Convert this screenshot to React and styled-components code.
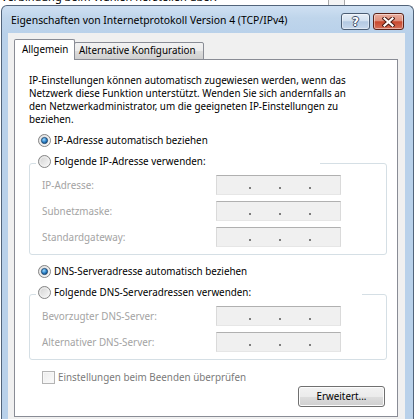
import React from "react";
import styled, { createGlobalStyle } from "styled-components";

const FONT = `"Noto Sans", "Open Sans", sans-serif`;

const GlobalStyle = createGlobalStyle`
  html, body { margin: 0; padding: 0; background: #fff; }
  body { font-family: ${FONT}; }
  #root { width: 417px; height: 419px; overflow: hidden; }
`;

const Screen = styled.div`
  width: 417px;
  height: 419px;
  overflow: hidden;
  background: #fff;
`;

const Strip = styled.div`
  height: 5px;
  overflow: hidden;
  display: flex;
  align-items: flex-start;
`;

const StripText = styled.div`
  margin-top: -10px;
  padding-left: 1px;
  font: 11px/14px ${FONT};
  color: #000;
  white-space: nowrap;
`;

const StripScroll = styled.div`
  margin-left: auto;
  margin-right: 72px;
  width: 15px;
  height: 5px;
  border-left: 1px solid #a9a9a9;
  border-right: 1px solid #a9a9a9;
  background: #f4f4f4;
`;

const Window = styled.div`
  margin-left: 1px;
  width: 413px;
  height: 414px;
  box-sizing: border-box;
  border: 1px solid #52647a;
  border-bottom: none;
  border-radius: 6px 6px 0 0;
  background: linear-gradient(#cfe0f2 0px, #bfd5eb 12px, #b9d1ea 28px);
  padding: 0 8px 0 6px;
  display: flex;
  flex-direction: column;
`;

const TitleBar = styled.div`
  height: 27px;
  flex: none;
  display: flex;
  align-items: flex-start;
  padding: 0 1px 0 3px;
`;

const Title = styled.div`
  margin-top: 7px;
  font: 10.4px/15px ${FONT};
  color: #000;
  white-space: nowrap;
`;

const CaptionButtons = styled.div`
  margin-left: auto;
  margin-top: 7px;
  display: flex;
  gap: 3px;
`;

const CaptionButton = styled.div`
  width: ${(p) => (p.$variant === "close" ? 31 : 29)}px;
  height: 17px;
  box-sizing: border-box;
  border: 1px solid ${(p) => (p.$variant === "close" ? "#5a2218" : "#4b5d73")};
  border-radius: 3px;
  background: ${(p) =>
    p.$variant === "close"
      ? "linear-gradient(#eaae9f 0%, #de8f7c 45%, #c9482d 52%, #d5705a 100%)"
      : "linear-gradient(#e6eef7 0%, #d3e1f0 45%, #b3c9e2 52%, #c7d8ec 100%)"};
  box-shadow: inset 0 0 0 1px rgba(255, 255, 255, 0.45);
  display: flex;
  align-items: center;
  justify-content: center;
`;

const HelpGlyph = styled.span`
  font: bold 12px/12px "DejaVu Sans", sans-serif;
  color: #fff;
  text-shadow: 1px 0 0 #3c4e66, -1px 0 0 #3c4e66, 0 1px 0 #3c4e66, 0 -1px 0 #3c4e66;
`;

const CloseIcon = () => (
  <svg width="13" height="10" viewBox="0 0 13 10">
    <path d="M2.5 1.5 L10.5 8.5 M10.5 1.5 L2.5 8.5" stroke="#4a1a12" strokeWidth="4.2" strokeLinecap="square" />
    <path d="M2.5 1.5 L10.5 8.5 M10.5 1.5 L2.5 8.5" stroke="#fff" strokeWidth="2.2" strokeLinecap="square" />
  </svg>
);

const Client = styled.div`
  flex: 1;
  background: #f0f0f0;
  padding: 6px 7px 0 6px;
  display: flex;
  flex-direction: column;
  font: 9.85px/15px ${FONT};
  color: #000;
`;

const TabRow = styled.div`
  display: flex;
  align-items: flex-end;
  position: relative;
  z-index: 1;
  margin-bottom: -1px;
`;

const Tab = styled.div`
  width: ${(p) => p.$w}px;
  height: ${(p) => (p.$active ? 21 : 18)}px;
  box-sizing: border-box;
  border: 1px solid #898c95;
  border-bottom: ${(p) => (p.$active ? "none" : "1px solid #898c95")};
  border-radius: 2px 2px 0 0;
  margin-left: ${(p) => (p.$active ? 0 : -1)}px;
  padding-left: ${(p) => (p.$active ? 7 : 4)}px;
  padding-top: ${(p) => (p.$active ? 2 : 0)}px;
  background: ${(p) =>
    p.$active ? "#fff" : "linear-gradient(#f2f2f2 0%, #ebebeb 50%, #dddddd 51%, #cfcfcf 100%)"};
  position: relative;
  z-index: ${(p) => (p.$active ? 2 : 1)};
  white-space: nowrap;
  line-height: 15px;
`;

const Panel = styled.div`
  border: 1px solid #898c95;
  background: #fff;
  display: flex;
  flex-direction: column;
  padding: 0 12px 9px 14px;
`;

const Intro = styled.p`
  margin: 14px 0 0;
  line-height: 13px;
  white-space: nowrap;
`;

const OptionRow = styled.div`
  margin-top: ${(p) => p.$top}px;
  padding-left: 9px;
  height: 15px;
  display: flex;
  align-items: center;
  gap: 3px;
  white-space: nowrap;
`;

const RadioSvg = styled.svg`
  flex: none;
  display: block;
`;

const Radio = ({ checked }) => (
  <RadioSvg width="13" height="13" viewBox="0 0 13 13">
    <defs>
      <linearGradient id="radioBg" x1="0" y1="0" x2="1" y2="1">
        <stop offset="0" stopColor="#cfcfcf" />
        <stop offset="1" stopColor="#fbfbfb" />
      </linearGradient>
      <radialGradient id="radioDot" cx="0.4" cy="0.35" r="0.75">
        <stop offset="0" stopColor="#9edbff" />
        <stop offset="0.55" stopColor="#2a7fc6" />
        <stop offset="1" stopColor="#0d3f70" />
      </radialGradient>
    </defs>
    <circle cx="6.5" cy="6.5" r="6" fill="url(#radioBg)" stroke="#858585" strokeWidth="1" />
    <circle cx="6.5" cy="6.5" r="4.6" fill="none" stroke="#f4f4f4" strokeWidth="0.8" />
    {checked && <circle cx="6.5" cy="6.5" r="3.1" fill="url(#radioDot)" stroke="#163a5e" strokeWidth="0.7" />}
  </RadioSvg>
);

const Group = styled.fieldset`
  margin: ${(p) => p.$top}px 0 0;
  width: 358px;
  min-width: 0;
  box-sizing: border-box;
  border: 1px solid #d5dfe5;
  border-radius: 3px;
  padding: 2px 0 ${(p) => p.$bottom}px 12px;
`;

const GroupLegend = styled.legend`
  width: ${(p) => p.$w}px;
  box-sizing: border-box;
  margin-left: -6px;
  padding: 0 0 4px 2px;
  height: 19px;
  display: flex;
  align-items: flex-start;
  gap: 3px;
  white-space: nowrap;
  line-height: 15px;
  & > svg { margin-top: 1px; }
`;

const FieldGrid = styled.div`
  display: grid;
  grid-template-columns: 174px 125px;
  row-gap: 6px;
  align-items: center;
`;

const FieldLabel = styled.span`
  color: #a3a3a3;
  white-space: nowrap;
`;

const IpField = styled.div`
  width: 125px;
  height: 20px;
  box-sizing: border-box;
  border: 1px solid #dadada;
  border-top-color: #b0b0b0;
  border-bottom-color: #e6e6e6;
  background: #f0f0f0;
  display: flex;
  align-items: flex-end;
  gap: 28px;
  padding: 0 0 5px 32px;
`;

const IpDot = styled.span`
  width: 2px;
  height: 2px;
  background: #7d7d7d;
`;

const CheckRow = styled.div`
  margin-top: 10px;
  padding-left: 13px;
  height: 15px;
  display: flex;
  align-items: center;
  gap: 3px;
  color: #7a7a7a;
  white-space: nowrap;
`;

const CheckBox = styled.span`
  width: 13px;
  height: 13px;
  box-sizing: border-box;
  border: 1px solid #b4b4b4;
  background: linear-gradient(135deg, #ececec, #fbfbfb);
  box-shadow: inset 0 0 0 1px #f7f7f7;
  flex: none;
`;

const PushButton = styled.button`
  align-self: flex-end;
  margin-top: 1px;
  width: 87px;
  height: 21px;
  box-sizing: border-box;
  border: 1px solid #707070;
  border-radius: 3px;
  background: linear-gradient(#f2f2f2 0%, #ebebeb 50%, #dddddd 51%, #cfcfcf 100%);
  box-shadow: inset 0 0 0 1px #fcfcfc;
  padding: 0;
  font: 9.85px/15px ${FONT};
  color: #000;
`;

const IpInput = () => (
  <IpField>
    <IpDot />
    <IpDot />
    <IpDot />
  </IpField>
);

const ipRows = ["IP-Adresse:", "Subnetzmaske:", "Standardgateway:"];
const dnsRows = ["Bevorzugter DNS-Server:", "Alternativer DNS-Server:"];

const Fields = ({ labels }) => (
  <FieldGrid>
    {labels.map((label) => (
      <React.Fragment key={label}>
        <FieldLabel>{label}</FieldLabel>
        <IpInput />
      </React.Fragment>
    ))}
  </FieldGrid>
);

export default function App() {
  return (
    <>
      <GlobalStyle />
      <Screen>
        <Strip>
          <StripText>Verbindung beim Wählen herstellen über:</StripText>
          <StripScroll />
        </Strip>
        <Window>
          <TitleBar>
            <Title>Eigenschaften von Internetprotokoll Version 4 (TCP/IPv4)</Title>
            <CaptionButtons>
              <CaptionButton $variant="help">
                <HelpGlyph>?</HelpGlyph>
              </CaptionButton>
              <CaptionButton $variant="close">
                <CloseIcon />
              </CaptionButton>
            </CaptionButtons>
          </TitleBar>
          <Client>
            <TabRow>
              <Tab $active $w={61}>Allgemein</Tab>
              <Tab $w={130}>Alternative Konfiguration</Tab>
            </TabRow>
            <Panel>
              <Intro>
                IP-Einstellungen können automatisch zugewiesen werden, wenn das
                <br />
                Netzwerk diese Funktion unterstützt. Wenden Sie sich andernfalls an
                <br />
                den Netzwerkadministrator, um die geeigneten IP-Einstellungen zu
                <br />
                beziehen.
              </Intro>
              <OptionRow $top={7}>
                <Radio checked />
                <span>IP-Adresse automatisch beziehen</span>
              </OptionRow>
              <Group $top={6} $bottom={7}>
                <GroupLegend $w={284}>
                  <Radio />
                  <span>Folgende IP-Adresse verwenden:</span>
                </GroupLegend>
                <Fields labels={ipRows} />
              </Group>
              <OptionRow $top={9}>
                <Radio checked />
                <span>DNS-Serveradresse automatisch beziehen</span>
              </OptionRow>
              <Group $top={6} $bottom={7}>
                <GroupLegend $w={326}>
                  <Radio />
                  <span>Folgende DNS-Serveradressen verwenden:</span>
                </GroupLegend>
                <Fields labels={dnsRows} />
              </Group>
              <CheckRow>
                <CheckBox />
                <span>Einstellungen beim Beenden überprüfen</span>
              </CheckRow>
              <PushButton type="button">Erweitert...</PushButton>
            </Panel>
          </Client>
        </Window>
      </Screen>
    </>
  );
}
